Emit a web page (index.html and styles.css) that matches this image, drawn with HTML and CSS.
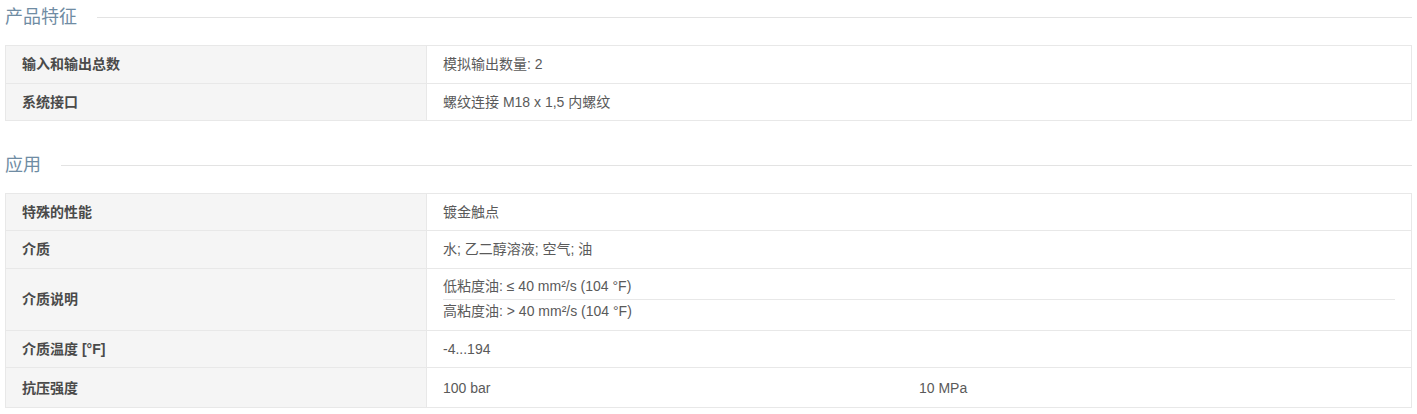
FILE: index.html
```html
<!DOCTYPE html>
<html lang="zh-CN">
<head>
<meta charset="utf-8">
<title>产品特征</title>
<link rel="stylesheet" href="styles.css">
</head>
<body>
<div class="page">
  <section class="sec">
    <h2 class="sec-title"><span>产品特征</span><i class="sec-line"></i></h2>
    <div class="tbl">
      <div class="row"><div class="lbl">输入和输出总数</div><div class="val">模拟输出数量: 2</div></div>
      <div class="row"><div class="lbl">系统接口</div><div class="val">螺纹连接 M18 x 1,5 内螺纹</div></div>
    </div>
  </section>
  <section class="sec sec-2">
    <h2 class="sec-title"><span>应用</span><i class="sec-line"></i></h2>
    <div class="tbl">
      <div class="row"><div class="lbl">特殊的性能</div><div class="val">镀金触点</div></div>
      <div class="row"><div class="lbl">介质</div><div class="val">水; 乙二醇溶液; 空气; 油</div></div>
      <div class="row"><div class="lbl">介质说明</div><div class="val val-multi"><div class="sub">低粘度油: ≤ 40 mm²/s (104 °F)</div><div class="sub">高粘度油: &gt; 40 mm²/s (104 °F)</div></div></div>
      <div class="row"><div class="lbl">介质温度 [°F]</div><div class="val">-4...194</div></div>
      <div class="row row-last"><div class="lbl">抗压强度</div><div class="val val-split"><span>100 bar</span><span>10 MPa</span></div></div>
    </div>
  </section>
</div>
</body>
</html>
```
FILE: styles.css
```css
* { box-sizing: border-box; }
html, body { margin: 0; padding: 0; background: #fff; }
body {
  font-family: "Liberation Sans", Arial, "Noto Sans CJK SC", sans-serif;
  color: #555;
}
.page {
  width: 1417px;
  padding: 4px 5px 0 5px;
}
.sec-title {
  display: flex;
  align-items: center;
  margin: 0 0 15px 0;
  height: 26px;
  font-size: 18px;
  font-weight: normal;
  color: #6f8ca3;
  line-height: 26px;
}
.sec-line {
  flex: 1;
  height: 1px;
  background: #e3e3e3;
  margin-left: 20px;
  margin-top: 1px;
}
.sec-2 { margin-top: 30.5px; }
.tbl {
  width: 1407px;
  border: 1px solid #e8e8e8;
  border-bottom: none;
}
.row {
  display: flex;
  border-bottom: 1px solid #e8e8e8;
  font-size: 14px;
  line-height: 20px;
}
.lbl {
  width: 421px;
  flex: none;
  background: #f5f5f5;
  border-right: 1px solid #e8e8e8;
  padding: 8.25px 16px 8.25px;
  font-weight: bold;
  color: #4a4a4a;
  display: flex;
  align-items: center;
}
.val {
  flex: 1;
  padding: 8.25px 16px 8.25px;
  color: #5a5a5a;
}
.row-last .lbl, .row-last .val { padding-top: 9.5px; padding-bottom: 9px; }
.val-multi {
  padding-top: 6.5px;
  padding-bottom: 6.5px;
}
.sub {
  line-height: 23.5px;
}
.sub + .sub {
  border-top: 1px solid #e8e8e8;
}
.val-split {
  display: grid;
  grid-template-columns: 1fr 1fr;
}
```
